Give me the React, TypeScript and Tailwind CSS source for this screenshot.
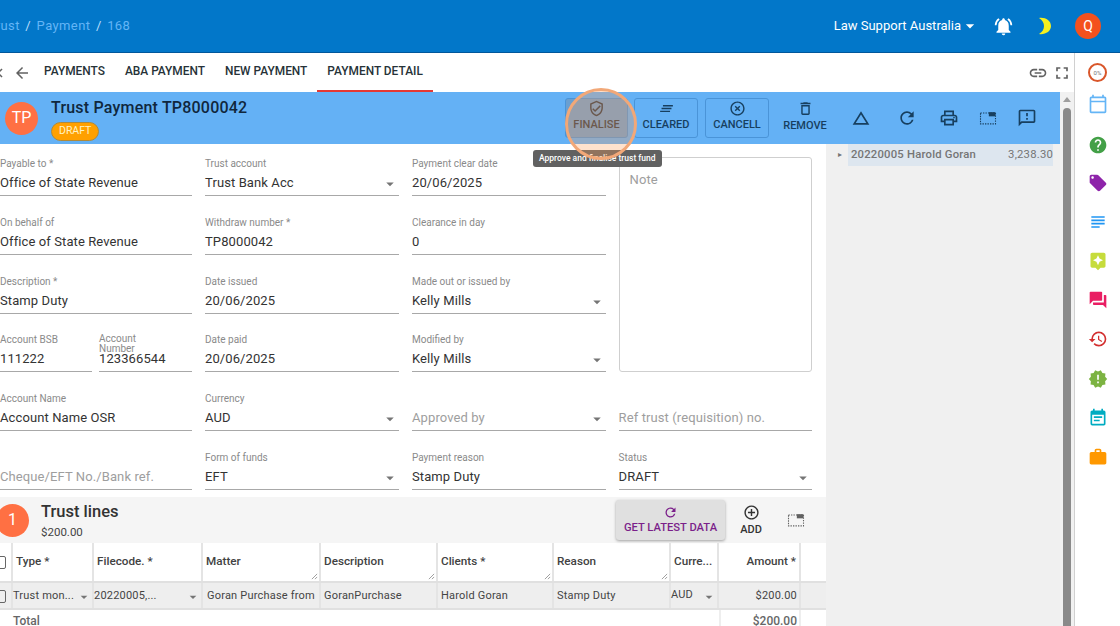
import {
  MdAddCircleOutline,
  MdArrowBack,
  MdArrowDropDown,
  MdAssistant,
  MdChangeHistory,
  MdChevronLeft,
  MdClearAll,
  MdEventNote,
  MdForum,
  MdFullscreen,
  MdHelp,
  MdHistory,
  MdHighlightOff,
  MdLink,
  MdLocalOffer,
  MdNewReleases,
  MdNotificationsActive,
  MdOutlineCalendarToday,
  MdOutlineDelete,
  MdOutlineFeedback,
  MdOutlinePrint,
  MdOutlineVerifiedUser,
  MdRefresh,
  MdSubject,
  MdWork,
} from "react-icons/md";

const tabs = ["PAYMENTS", "ABA PAYMENT", "NEW PAYMENT", "PAYMENT DETAIL"];

const rightIcons = [
  { icon: MdOutlineCalendarToday, cls: "text-[#64b5f6] mt-[12px]" },
  { icon: MdHelp, cls: "text-[#43a047] mt-[21px]" },
  { icon: MdLocalOffer, cls: "text-[#8e24aa] mt-[18px]" },
  { icon: MdSubject, cls: "text-[#2196f3] mt-[19px]" },
  { icon: MdAssistant, cls: "text-[#c6dc3c] mt-[19px]" },
  { icon: MdForum, cls: "text-[#e91e63] mt-[19px]" },
  { icon: MdHistory, cls: "text-[#d32f2f] mt-[19px]" },
  { icon: MdNewReleases, cls: "text-[#7cb342] mt-[20px]" },
  { icon: MdEventNote, cls: "text-[#00acc1] mt-[19px]" },
  { icon: MdWork, cls: "text-[#ff9800] mt-[19px]" },
];

function DottedPip({ className }: { className?: string }) {
  return (
    <svg viewBox="0 0 24 24" className={className} fill="none">
      <rect x="3" y="6" width="18" height="13" stroke="currentColor" strokeWidth="1.3" strokeDasharray="1.6 1.4" />
      <rect x="13" y="5" width="8" height="5" fill="currentColor" />
    </svg>
  );
}

function Moon({ className }: { className?: string }) {
  return (
    <svg viewBox="0 0 14 18" className={className} fill="currentColor">
      <path d="M1 1 C7 0 13 3.5 13 9 C13 14.5 7 18 1 17 C4.5 15 6 12 6 9 C6 6 4.5 3 1 1Z" />
    </svg>
  );
}

function Field({
  label,
  value,
  select,
  placeholder,
  className,
}: {
  label?: string;
  value?: string;
  select?: boolean;
  placeholder?: string;
  className?: string;
}) {
  return (
    <div className={`relative h-[45px] border-b border-[#a8a8a8] ${className ?? ""}`}>
      {label && <div className="absolute left-0 top-[7px] text-[10px] leading-[12px] text-[#8a8a8a]">{label}</div>}
      <div className={`absolute left-0 bottom-[4px] text-[13px] leading-[16px] tracking-[0.1px] ${placeholder ? "text-[#9e9e9e]" : "text-[#333]"}`}>
        {value ?? placeholder}
      </div>
      {select && <MdArrowDropDown className="absolute right-0 bottom-[2px] w-[18px] h-[18px] text-[#757575]" />}
    </div>
  );
}

function ActionButton({
  icon: Icon,
  label,
  boxed,
  className,
}: {
  icon: typeof MdRefresh;
  label: string;
  boxed?: boolean;
  className?: string;
}) {
  return (
    <div className={`flex flex-col items-center justify-center h-[40px] pb-[4px] text-[#173f5f] ${boxed ? "border border-[#4a94d8] rounded-[3px]" : ""} ${className ?? ""}`}>
      <Icon className="w-[17px] h-[17px]" />
      <span className={`text-[11px] font-medium leading-[15px] ${boxed ? "" : "mt-[1px]"}`}>{label}</span>
    </div>
  );
}

function Cell({ className, resize, children }: { className?: string; resize?: boolean; children?: React.ReactNode }) {
  return (
    <div className={`relative flex items-center h-full px-[3px] border-r-2 border-[#e4e4e4] shrink-0 whitespace-nowrap ${className ?? ""}`}>
      {children}
      {resize && (
        <svg viewBox="0 0 8 8" className="absolute right-[1px] bottom-[1px] w-[7px] h-[7px] text-[#777]">
          <path d="M1 7 L7 1 M4.5 7 L7 4.5" stroke="currentColor" strokeWidth="0.8" />
        </svg>
      )}
    </div>
  );
}

export default function App() {
  return (
    <div className="relative w-[1120px] h-[626px] overflow-hidden flex flex-col bg-white font-['Roboto',sans-serif]">
      <header className="h-[53px] shrink-0 bg-[#0277c9] border-b border-[#01579b] flex items-center">
        <div className="-ml-[12px] flex gap-[5.5px] text-[13px] tracking-[0.4px] text-[#64b5f6]">
          <span>Trust</span>
          <span className="text-[#bbdefb]">/</span>
          <span>Payment</span>
          <span className="text-[#bbdefb]">/</span>
          <span>168</span>
        </div>
        <div className="ml-auto flex items-center pr-[19px]">
          <span className="text-[13px] text-white">Law Support Australia</span>
          <MdArrowDropDown className="w-5 h-5 text-white -ml-[1px]" />
          <MdNotificationsActive className="w-[21px] h-[21px] text-white ml-[13px]" />
          <Moon className="w-[14px] h-[18px] text-[#f6f01e] ml-[24px]" />
          <div className="ml-[23px] w-[26px] h-[26px] rounded-full bg-[#f4511e] text-white text-[14px] flex items-center justify-center">Q</div>
        </div>
      </header>

      <div className="flex-1 flex min-h-0">
        <div className="w-[1075px] flex flex-col border-r border-[#d0d0d0] shrink-0">
          <nav className="h-[39px] shrink-0 flex items-stretch pr-[2px]">
            <MdChevronLeft className="-ml-[9px] self-center w-[18px] h-[18px] text-[#616161]" />
            <MdArrowBack className="ml-[4px] self-center w-[18px] h-[18px] text-[#616161]" />
            <div className="flex ml-[3px] h-full">
              {tabs.map((t, i) => (
                <div
                  key={t}
                  className={`flex items-center px-[10px] pt-[1px] text-[11.9px] font-medium text-[#263238] ${i === 3 ? "border-b-2 border-[#e53935]" : "border-b-2 border-transparent"}`}
                >
                  {t}
                </div>
              ))}
            </div>
            <MdLink className="ml-auto self-center w-5 h-5 text-[#616161]" />
            <MdFullscreen className="ml-[4px] self-center w-5 h-5 text-[#616161]" />
          </nav>

          <div className="flex-1 flex min-h-0">
            <div className="w-[1060px] shrink-0 flex flex-col">
              <div className="h-[52px] shrink-0 bg-[#64b1f5] flex items-center">
                <div className="ml-[5px] w-[33px] h-[33px] rounded-full bg-[#ff7043] text-white text-[16px] flex items-center justify-center">TP</div>
                <div className="ml-[13px] pt-[2px] flex flex-col items-start">
                  <div className="text-[16px] font-medium leading-[20px] text-[#10273d] tracking-[0.2px]">Trust Payment TP8000042</div>
                  <div className="mt-[4px] h-[19px] px-[7px] rounded-full bg-[#ffa000] border border-[#b08a3a] text-[10.5px] text-[#fff3c4] flex items-center">DRAFT</div>
                </div>
                <div className="ml-auto flex items-center">
                  <ActionButton icon={MdOutlineVerifiedUser} label="FINALISE" boxed className="w-[63px] bg-[#6a9fd0] !text-[#2b3a48]" />
                  <ActionButton icon={MdClearAll} label="CLEARED" boxed className="w-[64px] ml-[6px]" />
                  <ActionButton icon={MdHighlightOff} label="CANCELL" boxed className="w-[64px] ml-[7px]" />
                  <ActionButton icon={MdOutlineDelete} label="REMOVE" className="w-[50px] ml-[11px]" />
                  <MdChangeHistory className="ml-[21px] w-[20px] h-[20px] text-[#173f5f]" />
                  <MdRefresh className="ml-[26px] w-[20px] h-[20px] text-[#173f5f]" />
                  <MdOutlinePrint className="ml-[22px] w-[20px] h-[20px] text-[#173f5f]" />
                  <DottedPip className="ml-[19px] w-[20px] h-[20px] text-[#173f5f]" />
                  <MdOutlineFeedback className="ml-[19px] mr-[23px] w-[20px] h-[20px] text-[#173f5f]" />
                </div>
              </div>

              <div className="flex-1 flex min-h-0">
                <div className="w-[826px] shrink-0 flex flex-col">
                  <div className="h-[353px] shrink-0 pt-[7px] grid grid-cols-[192px_194px_193.6px_193px] gap-x-[13px] auto-rows-[45px] gap-y-[13.8px]">
                    <Field label="Payable to *" value="Office of State Revenue" />
                    <Field label="Trust account" value="Trust Bank Acc" select />
                    <Field label="Payment clear date" value="20/06/2025" />
                    <div className="row-span-4 mt-[6px] border border-[#cfcfcf] rounded-[3px] px-[10px] py-[14px] text-[13px] leading-[16px] tracking-[0.1px] text-[#9e9e9e]">Note</div>

                    <Field label="On behalf of" value="Office of State Revenue" />
                    <Field label="Withdraw number *" value="TP8000042" />
                    <Field label="Clearance in day" value="0" />

                    <Field label="Description *" value="Stamp Duty" />
                    <Field label="Date issued" value="20/06/2025" />
                    <Field label="Made out or issued by" value="Kelly Mills" select />

                    <div className="flex gap-[7px]">
                      <Field label="Account BSB" value="111222" className="w-[92px]" />
                      <div className="relative w-[93px] h-[45px] border-b border-[#a8a8a8]">
                        <div className="absolute left-0 top-[7px] text-[10px] leading-[10px] text-[#8a8a8a]">Account<br />Number</div>
                        <div className="absolute left-0 bottom-[4px] text-[13px] leading-[16px] tracking-[0.1px] text-[#333]">123366544</div>
                      </div>
                    </div>
                    <Field label="Date paid" value="20/06/2025" />
                    <Field label="Modified by" value="Kelly Mills" select />

                    <Field label="Account Name" value="Account Name OSR" />
                    <Field label="Currency" value="AUD" select />
                    <Field placeholder="Approved by" select />
                    <Field placeholder="Ref trust (requisition) no." />

                    <Field placeholder="Cheque/EFT No./Bank ref." />
                    <Field label="Form of funds" value="EFT" select />
                    <Field label="Payment reason" value="Stamp Duty" />
                    <Field label="Status" value="DRAFT" select />
                  </div>

                  <div className="h-[46px] shrink-0 bg-[#f5f5f5] flex items-center">
                    <div className="-ml-[4px] w-[33px] h-[33px] rounded-full bg-[#ff7043] text-white text-[16px] flex items-center justify-center">1</div>
                    <div className="ml-[12px] flex flex-col">
                      <div className="text-[16.5px] font-medium leading-[20px] text-[#333]">Trust lines</div>
                      <div className="text-[11.5px] leading-[14px] mt-[3px] text-[#444]">$200.00</div>
                    </div>
                    <div className="ml-auto flex items-center pr-[20px]">
                      <div className="w-[109px] h-[40px] pb-[1px] rounded-[3px] bg-[#e0e0e0] shadow-[0_1px_3px_rgba(0,0,0,0.35)] flex flex-col items-center justify-center text-[#7b1f8a]">
                        <MdRefresh className="w-[15px] h-[15px]" />
                        <span className="text-[11.2px] font-medium leading-[14px] mt-[1px]">GET LATEST DATA</span>
                      </div>
                      <div className="ml-[5px] w-[42px] flex flex-col items-center text-[#333]">
                        <MdAddCircleOutline className="w-[17px] h-[17px]" />
                        <span className="text-[11px] font-medium leading-[14px] mt-[2px]">ADD</span>
                      </div>
                      <DottedPip className="ml-[14px] w-[20px] h-[20px] text-[#616161]" />
                    </div>
                  </div>

                  <div className="h-[40px] shrink-0 flex text-[11.7px] font-medium text-[#424242] border-b-2 border-[#e0e0e0]">
                    <Cell className="w-[13px] !px-0"><div className="-ml-[4px] w-[10px] h-[13px] border border-[#666] rounded-[2px]" /></Cell>
                    <Cell className="w-[81px]"><span>Type *</span></Cell>
                    <Cell className="w-[109px]"><span>Filecode. *</span></Cell>
                    <Cell className="w-[118px]" resize><span>Matter</span></Cell>
                    <Cell className="w-[117px]" resize><span>Description</span></Cell>
                    <Cell className="w-[116px]" resize><span>Clients *</span></Cell>
                    <Cell className="w-[117px]" resize><span>Reason</span></Cell>
                    <Cell className="w-[48px]"><span>Curre...</span></Cell>
                    <Cell className="w-[82px] justify-end"><span>Amount *</span></Cell>
                    <Cell className="flex-1 !border-r-0" />
                  </div>
                  <div className="h-[27px] shrink-0 flex text-[11px] tracking-[0.2px] text-[#444] bg-[#eeeeee] border-b-2 border-[#e0e0e0] [&>div]:pt-[2px]">
                    <Cell className="w-[13px] !px-0"><div className="-ml-[4px] w-[10px] h-[13px] border border-[#666] rounded-[2px]" /></Cell>
                    <Cell className="w-[81px] !px-0 justify-between"><span>Trust mon...</span><MdArrowDropDown className="w-4 h-4 shrink-0 text-[#757575]" /></Cell>
                    <Cell className="w-[109px] !px-0 justify-between"><span>20220005,...</span><MdArrowDropDown className="w-4 h-4 shrink-0 text-[#757575]" /></Cell>
                    <Cell className="w-[118px]"><span className="ml-[1px]">Goran Purchase from</span></Cell>
                    <Cell className="w-[117px]"><span>GoranPurchase</span></Cell>
                    <Cell className="w-[116px]"><span>Harold Goran</span></Cell>
                    <Cell className="w-[117px]"><span>Stamp Duty</span></Cell>
                    <Cell className="w-[48px] !px-0 justify-between"><span className="-mt-[2px]">AUD</span><MdArrowDropDown className="w-4 h-4 shrink-0 text-[#757575]" /></Cell>
                    <Cell className="w-[82px] justify-end !pr-[2px]"><span>$200.00</span></Cell>
                    <Cell className="flex-1 !border-r-0" />
                  </div>
                  <div className="flex-1 flex text-[12px] font-medium text-[#666]">
                    <div className="w-[719px] pl-[13px] pt-[2px]">Total</div>
                    <div className="w-[82px] border-l-2 border-r-2 border-[#eeeeee] text-right pr-[2px] pt-[2px]">$200.00</div>
                  </div>
                </div>

                <aside className="flex-1 bg-[#f0f0f0] pl-[8px] pr-[7px]">
                  <div className="h-[22px] flex items-center text-[11.3px] text-[#757575] tracking-[0.2px]">
                    <span className="w-[12px] mr-[2px] flex justify-center text-[8px] text-[#757575]">▸</span>
                    <div className="flex-1 h-full bg-[#dde6ef] flex items-center justify-between pl-[3px]">
                      <span className="font-medium">20220005 Harold Goran</span>
                      <span>3,238.30</span>
                    </div>
                  </div>
                </aside>
              </div>
            </div>

            <div className="w-[14px] shrink-0 bg-[#f1f1f1] flex flex-col items-center">
              <div className="mt-[5px] w-0 h-0 border-l-[4px] border-r-[4px] border-b-[5px] border-l-transparent border-r-transparent border-b-[#9e9e9e]" />
              <div className="mt-[6px] flex-1 w-[8px] rounded-t-[4px] bg-[#8a8a8a]" />
            </div>
          </div>
        </div>

        <aside className="flex-1 flex flex-col items-center">
          <div className="mt-[10px] w-[19px] h-[19px] rounded-full border-2 border-[#d9562a] flex items-center justify-center text-[6px] text-[#757575]">0%</div>
          {rightIcons.map(({ icon: Icon, cls }, i) => (
            <Icon key={i} className={`w-[20px] h-[20px] ${cls}`} />
          ))}
        </aside>
      </div>

      {/* tooltip + highlight ring over the finalise button */}
      <div className="absolute left-[533px] top-[150px] h-[17px] px-[6px] rounded-[3px] bg-[#616161] text-white text-[8.5px] font-medium flex items-center">
        Approve and finalise trust fund
      </div>
      <div className="absolute left-[565px] top-[88px] w-[72px] h-[72px] rounded-full bg-[#ffa05a]/30 border-[3px] border-[#f2a878]" />
    </div>
  );
}
